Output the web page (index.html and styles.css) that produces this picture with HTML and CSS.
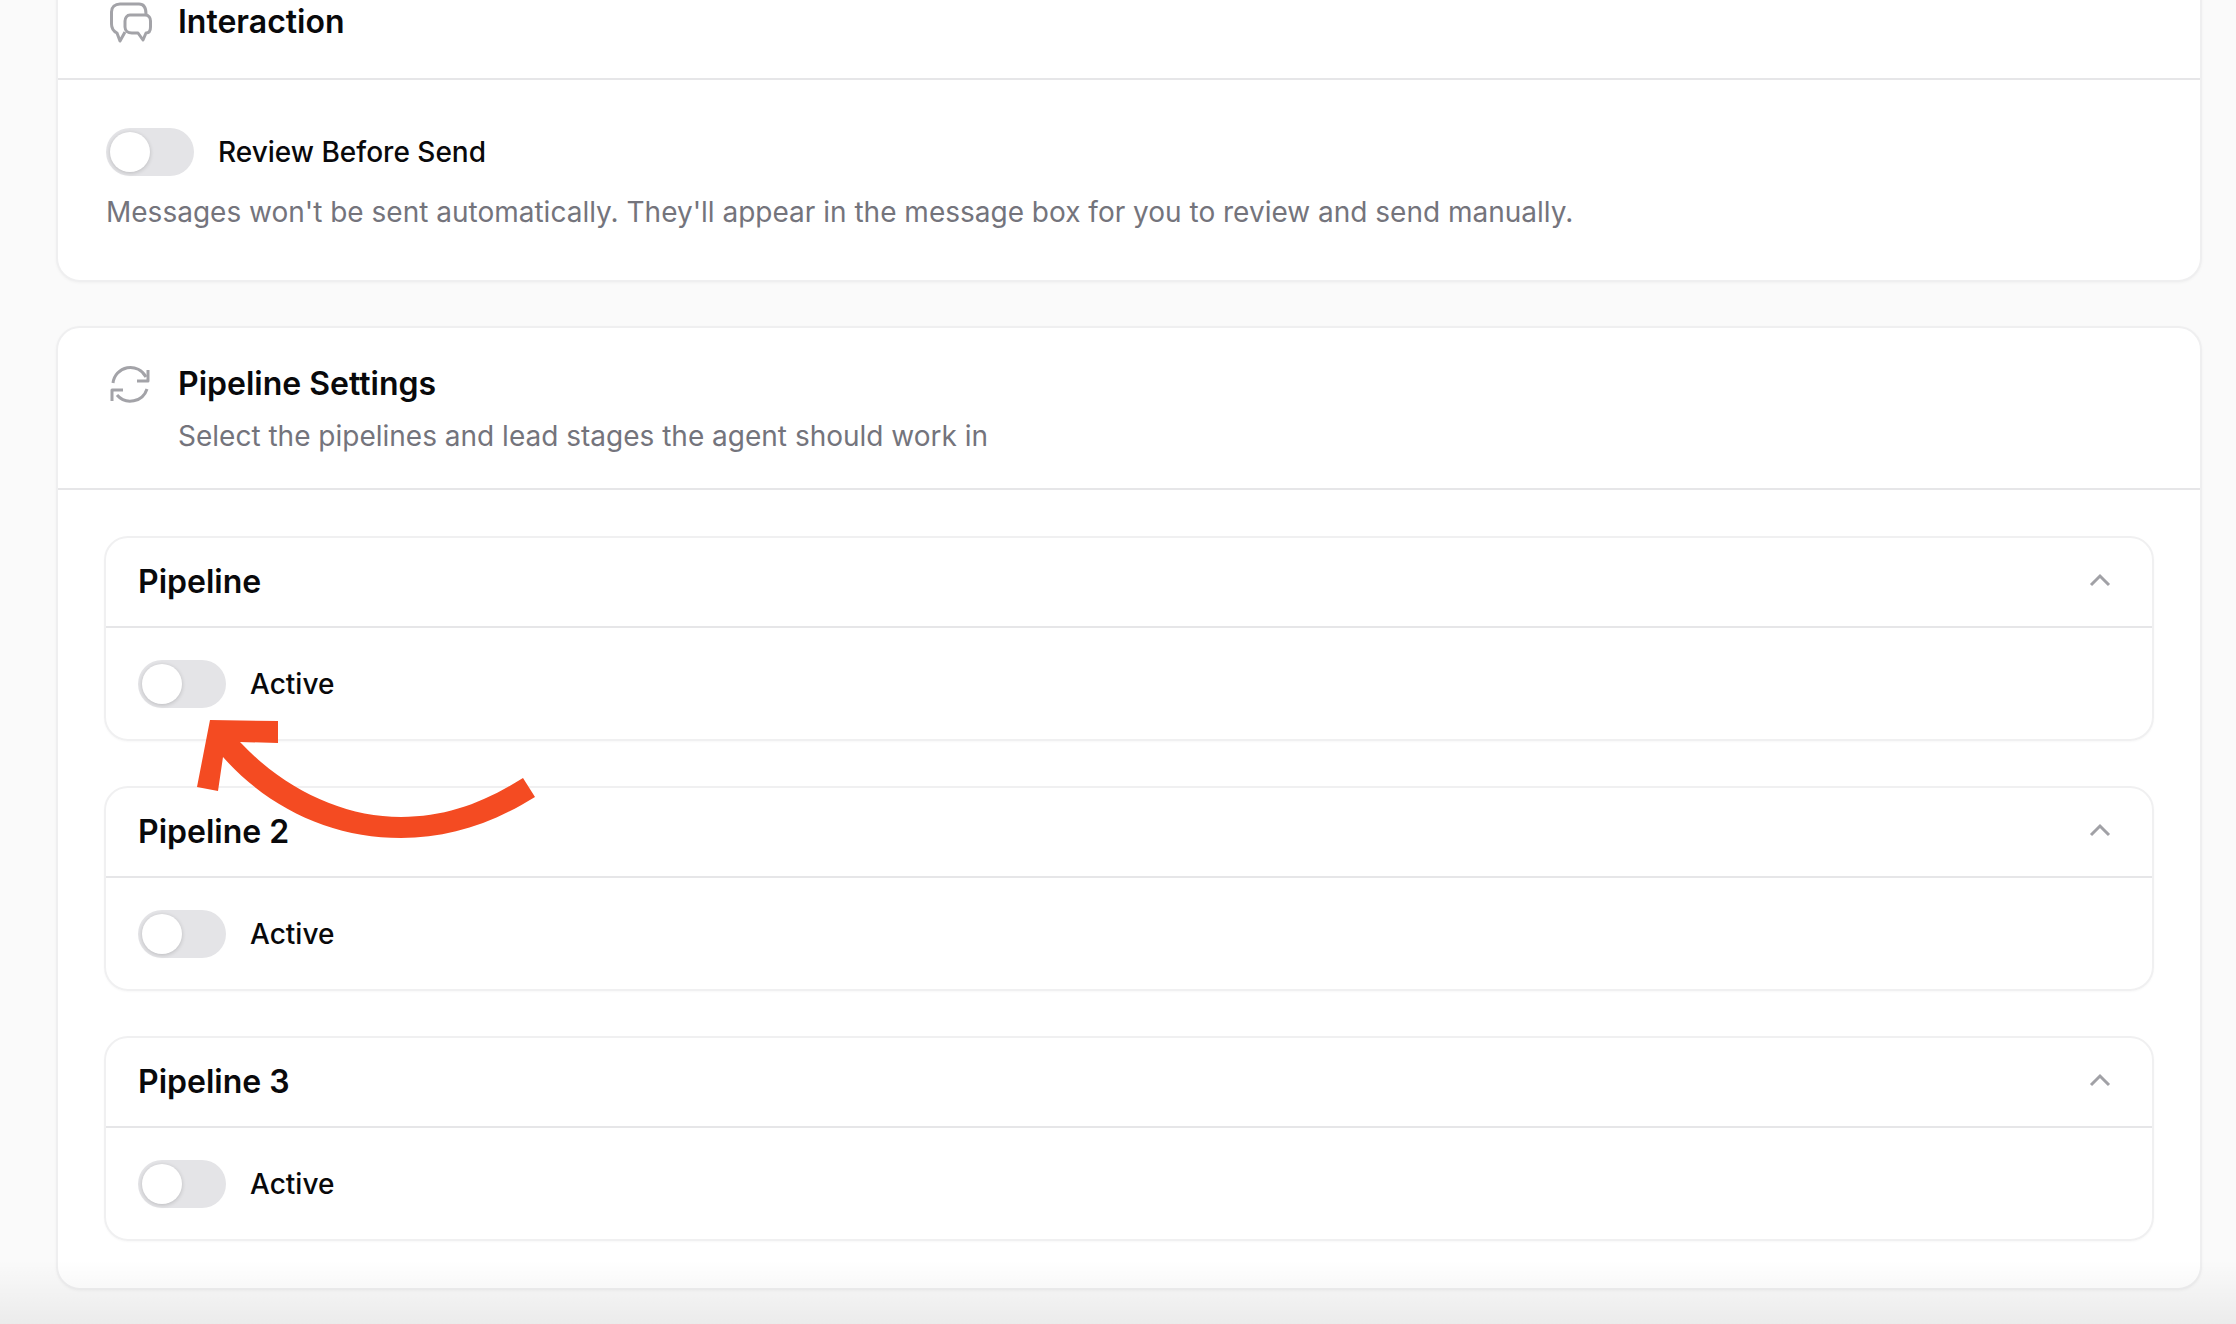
FILE: index.html
```html
<!DOCTYPE html>
<html lang="en">
<head>
<meta charset="utf-8">
<title>Agent settings</title>
<link rel="stylesheet" href="styles.css">
</head>
<body>
<main class="page">
  <section class="card">
    <header class="card-head card-head-plain">
      <svg class="head-icon" viewBox="0 4 48 48" fill="none"><path d="M19 34L14 43L11 35C7 33 5.500 30 5.500 26V14C5.500 9 9 6 14 6H33C37 6 40 9 40 16"/><path d="M24 17H39C43 17 44.500 20 44.500 23V29C44.500 33 43 35 40 35L37 42L32 35H26C22 35 19 33 19 29V23C19 20 21 17 24 17Z"/></svg>
      <div><h2 class="card-title">Interaction</h2></div>
    </header>
    <div class="card-body review">
      <label class="switch-row"><span class="switch"><span class="knob"></span></span><span class="switch-label">Review Before Send</span></label>
      <p class="muted review-text">Messages won't be sent automatically. They'll appear in the message box for you to review and send manually.</p>
    </div>
  </section>

  <section class="card">
    <header class="card-head">
      <svg class="head-icon" viewBox="0 2 48 48" fill="none"><path d="M7 21A17.500 17.500 0 0 1 40 15"/><path d="M42 8V19H31"/><path d="M41 27A17.500 17.500 0 0 1 11 33"/><path d="M6 39V28H17"/></svg>
      <div>
        <h2 class="card-title">Pipeline Settings</h2>
        <p class="muted head-text">Select the pipelines and lead stages the agent should work in</p>
      </div>
    </header>
    <div class="card-body pipelines">
      <article class="pipeline">
        <div class="pipeline-head"><h3 class="pipeline-title">Pipeline</h3><svg class="chevron" viewBox="0 0 24 24" fill="none"><path d="M3 15L12 6L21 15"/></svg></div>
        <div class="pipeline-body"><label class="switch-row"><span class="switch"><span class="knob"></span></span><span class="switch-label">Active</span></label></div>
      </article>
      <article class="pipeline">
        <div class="pipeline-head"><h3 class="pipeline-title">Pipeline 2</h3><svg class="chevron" viewBox="0 0 24 24" fill="none"><path d="M3 15L12 6L21 15"/></svg></div>
        <div class="pipeline-body"><label class="switch-row"><span class="switch"><span class="knob"></span></span><span class="switch-label">Active</span></label></div>
      </article>
      <article class="pipeline">
        <div class="pipeline-head"><h3 class="pipeline-title">Pipeline 3</h3><svg class="chevron" viewBox="0 0 24 24" fill="none"><path d="M3 15L12 6L21 15"/></svg></div>
        <div class="pipeline-body"><label class="switch-row"><span class="switch"><span class="knob"></span></span><span class="switch-label">Active</span></label></div>
      </article>
    </div>
  </section>
</main>
<svg class="arrow" viewBox="0 0 360 130"><path d="M13 0L81 1V23L43 22C88 70 147 97 204 97C250 97 288 82 326 58L338 77C293 105 250 118 204 118C137 118 73 90 26 37L21 71L0 67Z"/></svg>
<div class="fade"></div>
</body>
</html>
```

FILE: styles.css
```css
* { box-sizing: border-box; }

html, body {
  margin: 0;
  height: 1324px;
  overflow: hidden;
}

body {
  position: relative;
  background: #fafafa;
  color: #09090b;
  font-family: Inter, "Liberation Sans", sans-serif;
}

.page {
  display: flex;
  flex-direction: column;
  gap: 44px;
  margin: -36px 34px 0 56px;
}

.card {
  background: #fff;
  border: 2px solid #efeff0;
  border-radius: 24px;
  box-shadow: 0 1px 3px rgba(0, 0, 0, 0.04);
}

.card-head {
  display: flex;
  gap: 24px;
  padding: 36px 48px 32px;
  border-bottom: 2px solid #e6e6e8;
}

.card-head-plain { padding-bottom: 28px; }

.head-icon {
  flex: none;
  width: 48px;
  height: 48px;
}

.head-icon path {
  stroke: #a3a3a8;
  stroke-width: 3;
  stroke-linejoin: round;
}

.card-title {
  margin: 0;
  font-size: 32px;
  line-height: 40px;
  font-weight: 600;
}

.muted {
  margin: 0;
  color: #74747c;
  font-size: 28px;
  line-height: 40px;
}

.head-text { margin-top: 12px; }

.card-body { padding: 48px; }

.review-text { margin-top: 16px; }

.switch-row {
  display: flex;
  align-items: center;
  gap: 24px;
}

.switch {
  display: block;
  width: 88px;
  height: 48px;
  padding: 4px;
  background: #e4e4e7;
  border-radius: 24px;
}

.knob {
  display: block;
  width: 40px;
  height: 40px;
  background: #fff;
  border-radius: 50%;
  box-shadow: 0 1px 4px rgba(0, 0, 0, 0.18);
}

.switch-label {
  font-size: 28px;
  line-height: 40px;
  font-weight: 500;
}

.pipelines {
  display: flex;
  flex-direction: column;
  gap: 45px;
  padding: 46px 46px 47px;
}

.pipeline {
  border: 2px solid #f0f0f1;
  border-radius: 24px;
  box-shadow: 0 1px 2px rgba(0, 0, 0, 0.03);
}

.pipeline-head {
  display: flex;
  align-items: center;
  justify-content: space-between;
  height: 90px;
  padding: 0 40px 0 32px;
  border-bottom: 2px solid #e6e6e8;
}

.pipeline-title {
  margin: 0;
  font-size: 32px;
  line-height: 40px;
  font-weight: 600;
}

.chevron {
  width: 24px;
  height: 24px;
}

.chevron path {
  stroke: #a1a1a6;
  stroke-width: 3;
}

.pipeline-body { padding: 32px 32px 31px; }

.arrow {
  position: absolute;
  left: 197px;
  top: 720px;
  width: 360px;
  height: 130px;
}

.arrow path { fill: #f44b22; }

.fade {
  position: absolute;
  left: 0;
  right: 0;
  bottom: 0;
  height: 64px;
  background: linear-gradient(rgba(0, 0, 0, 0), rgba(0, 0, 0, 0.06));
  pointer-events: none;
}
```
